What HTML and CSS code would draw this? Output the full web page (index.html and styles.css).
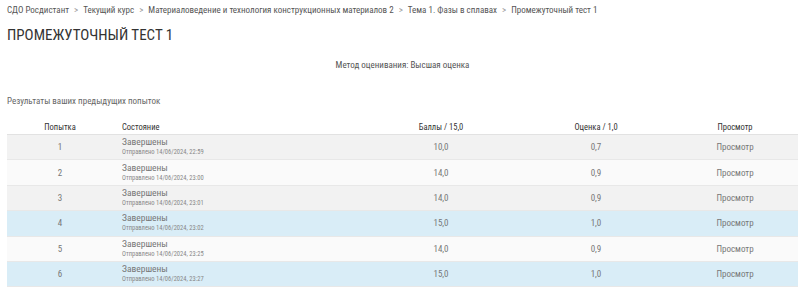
FILE: index.html
```html
<!DOCTYPE html>
<html>
<head>
<meta charset="utf-8">
<title>Промежуточный тест 1</title>
<link rel="stylesheet" href="styles.css">
</head>
<body>
<div class="crumbs"><span>СДО Росдистант</span><span class="sep">&gt;</span><span>Текущий курс</span><span class="sep">&gt;</span><span>Материаловедение и технология конструкционных материалов 2</span><span class="sep">&gt;</span><span>Тема 1. Фазы в сплавах</span><span class="sep">&gt;</span><span>Промежуточный тест 1</span></div>
<h1>Промежуточный тест 1</h1>
<p class="method">Метод оценивания: Высшая оценка</p>
<p class="prev">Результаты ваших предыдущих попыток</p>
<table class="attempts">
  <thead>
    <tr>
      <th class="c-num">Попытка</th>
      <th class="c-state">Состояние</th>
      <th class="c-mark">Баллы / 15,0</th>
      <th class="c-grade">Оценка / 1,0</th>
      <th class="c-view">Просмотр</th>
    </tr>
  </thead>
  <tbody>
    <tr class="odd">
      <td class="c-num">1</td>
      <td class="c-state">Завершены<span class="sub">Отправлено 14/06/2024, 22:59</span></td>
      <td class="c-mark">10,0</td><td class="c-grade">0,7</td><td class="c-view">Просмотр</td>
    </tr>
    <tr class="even">
      <td class="c-num">2</td>
      <td class="c-state">Завершены<span class="sub">Отправлено 14/06/2024, 23:00</span></td>
      <td class="c-mark">14,0</td><td class="c-grade">0,9</td><td class="c-view">Просмотр</td>
    </tr>
    <tr class="odd">
      <td class="c-num">3</td>
      <td class="c-state">Завершены<span class="sub">Отправлено 14/06/2024, 23:01</span></td>
      <td class="c-mark">14,0</td><td class="c-grade">0,9</td><td class="c-view">Просмотр</td>
    </tr>
    <tr class="best">
      <td class="c-num">4</td>
      <td class="c-state">Завершены<span class="sub">Отправлено 14/06/2024, 23:02</span></td>
      <td class="c-mark">15,0</td><td class="c-grade">1,0</td><td class="c-view">Просмотр</td>
    </tr>
    <tr class="even">
      <td class="c-num">5</td>
      <td class="c-state">Завершены<span class="sub">Отправлено 14/06/2024, 23:25</span></td>
      <td class="c-mark">14,0</td><td class="c-grade">0,9</td><td class="c-view">Просмотр</td>
    </tr>
    <tr class="best">
      <td class="c-num">6</td>
      <td class="c-state">Завершены<span class="sub">Отправлено 14/06/2024, 23:27</span></td>
      <td class="c-mark">15,0</td><td class="c-grade">1,0</td><td class="c-view">Просмотр</td>
    </tr>
  </tbody>
</table>
</body>
</html>
```

FILE: styles.css
```css
body {
  margin: 0;
  padding: 0 2px 0 7px;
  font-family: "Roboto Condensed", Roboto, sans-serif;
  font-stretch: condensed;
  color: #555;
  font-size: 9px;
}
.crumbs {
  padding-top: 4px;
  line-height: 12px;
  font-size: 9px;
  color: #555;
  white-space: nowrap;
}
.crumbs .sep {
  color: #999;
  margin: 0 5px;
}
h1 {
  margin: 9px 0 0;
  font-size: 15px;
  font-weight: normal;
  text-transform: uppercase;
  color: #333;
  line-height: 20px;
}
.method {
  margin: 14px 0 0;
  text-align: center;
  line-height: 12px;
}
.prev {
  margin: 24px 0 0;
  line-height: 12px;
  color: #666;
}
.attempts {
  margin-top: 13px;
  width: 791px;
  border-collapse: collapse;
  table-layout: fixed;
}
.attempts th {
  font-weight: normal;
  font-size: 8.5px;
  color: #333;
  height: 14px;
  line-height: 14px;
  padding: 0;
  border-bottom: 1px solid #e2e2e2;
}
.attempts td {
  padding: 0;
  height: 24.4px;
  border-bottom: 1px solid #e8e8e8;
  color: #777;
}
.c-num { width: 106px; text-align: center; }
.c-state { width: 240px; padding-left: 9px !important; text-align: left; }
.c-mark { width: 158px; text-align: center; }
.c-grade { width: 152px; text-align: center; }
.c-view { width: 126px; text-align: center; }
td.c-state { line-height: 10px; font-size: 9.5px; }
.sub {
  display: block;
  font-size: 6.5px;
  line-height: 10px;
  color: #888;
}
tr.odd { background: #f2f2f2; }
tr.even { background: #fafafa; }
tr.best { background: #d9edf7; }
```
